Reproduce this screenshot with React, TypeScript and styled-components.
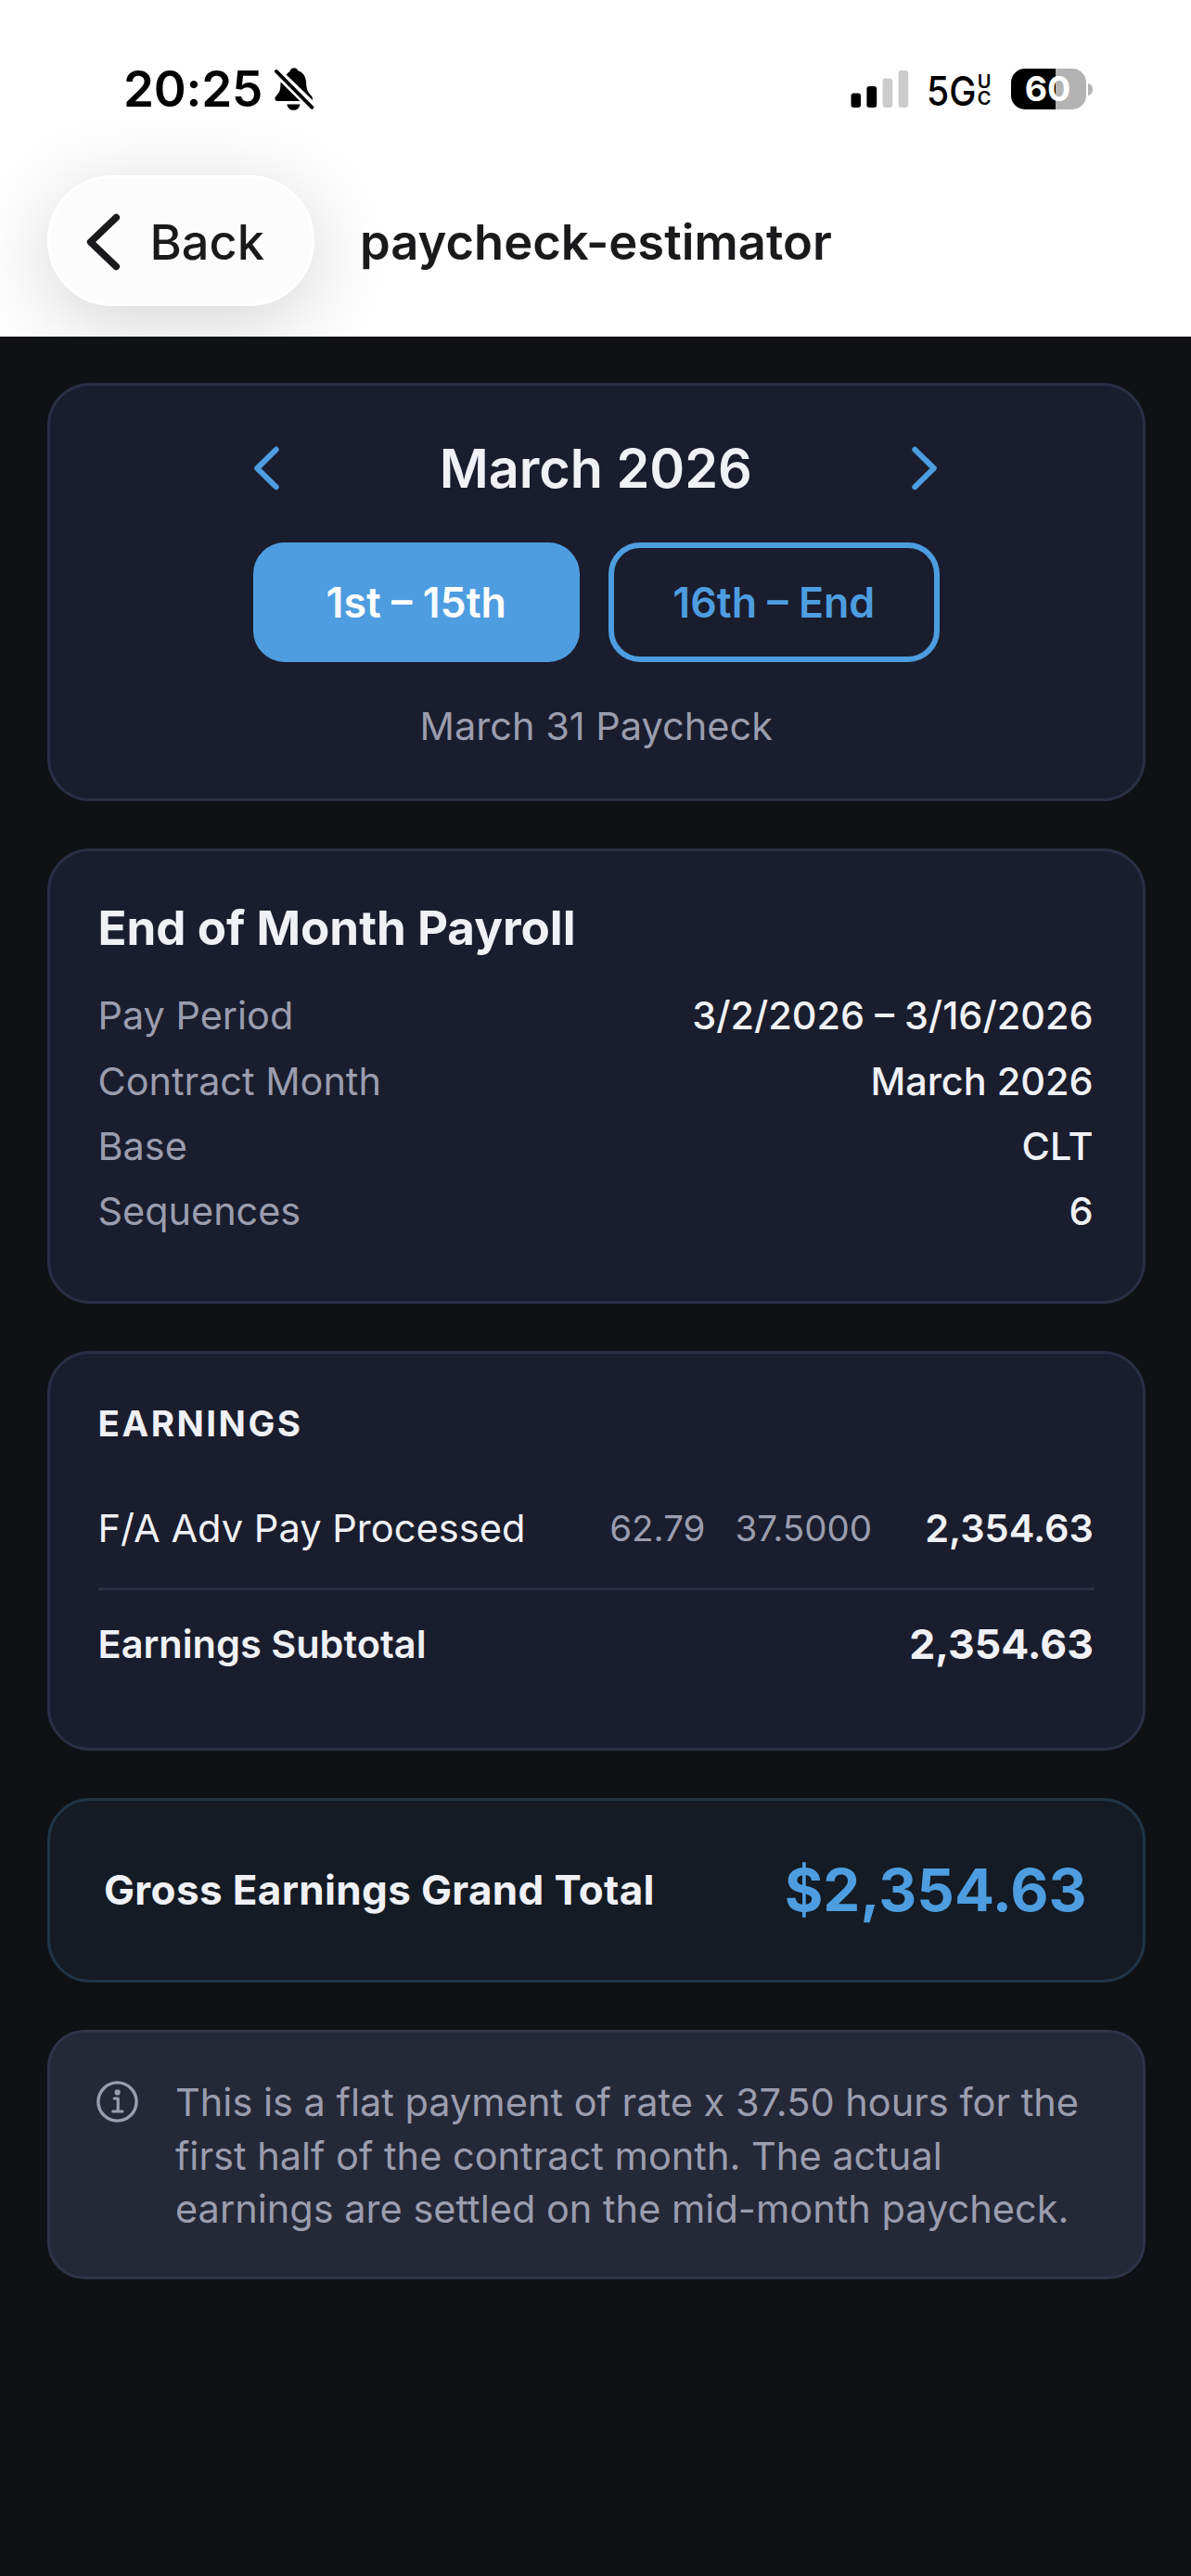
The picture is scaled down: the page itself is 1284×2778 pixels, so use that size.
import React from "react";
import styled, { createGlobalStyle, css } from "styled-components";

const color = {
  page: "#0f1115",
  chrome: "#fefefe",
  ink: "#1a1a1c",
  card: "#1a1d2d",
  line: "#2b2f45",
  text: "#f0f1f6",
  muted: "#9b9dae",
  accent: "#4d9de0",
};

const GlobalStyle = createGlobalStyle`
  *, *::before, *::after { box-sizing: border-box; }
  html, body { margin: 0; background: ${color.page}; }
  body {
    font-family: Inter, "Liberation Sans", sans-serif;
    -webkit-font-smoothing: antialiased;
  }
`;

const Screen = styled.div`
  width: 1284px;
  min-height: 2778px;
  background: ${color.page};
  color: ${color.text};
`;

/* ---------- top chrome ---------- */

const TopBar = styled.header`
  height: 363px;
  overflow: hidden;
  background: ${color.chrome};
`;

const StatusBar = styled.div`
  height: 189px;
  padding: 73px 106px 0 133px;
  display: flex;
  justify-content: space-between;
  align-items: flex-start;
  color: #000;
`;

const StatusGroup = styled.div`
  height: 46px;
  display: flex;
  align-items: center;
`;

const Clock = styled.span`
  font-size: 53px;
  font-weight: 600;
  line-height: 46px;
  letter-spacing: -0.2px;
  margin-right: 13px;
`;

const Network = styled.span`
  display: inline-block;
  width: 50px;
  margin: 3px 0 0 19px;
  font-size: 44px;
  font-weight: 500;
  line-height: 46px;
  transform: scaleX(0.89);
  transform-origin: left center;
  white-space: nowrap;
`;

const NetworkSuffix = styled.span`
  display: flex;
  flex-direction: column;
  width: 16px;
  margin: 1px 0 0 4px;
  font-size: 20px;
  font-weight: 600;
  line-height: 18px;
  text-align: center;
`;

const Battery = styled.span`
  width: 81px;
  height: 44px;
  margin: 0 2px 0 21px;
  border-radius: 15px;
  background: linear-gradient(90deg, #000 59%, #b3b3b3 59%);
  color: #fff;
  font-size: 37.5px;
  font-weight: 700;
  line-height: 44px;
  text-align: center;
  padding-right: 2px;
`;

const BatteryTip = styled.span`
  width: 5px;
  height: 13px;
  border-radius: 0 5px 5px 0 / 0 6.5px 6.5px 0;
  background: #b3b3b3;
`;

const NavBar = styled.div`
  display: flex;
  align-items: center;
  gap: 49px;
  padding-left: 51px;
`;

const BackButton = styled.button`
  width: 288px;
  height: 141px;
  padding: 0 0 0 38.5px;
  display: flex;
  align-items: center;
  gap: 32px;
  border: 3px solid #fff;
  border-radius: 70px;
  background: #fcfcfc;
  box-shadow: 0 18px 84px rgba(0, 0, 0, 0.16);
  color: ${color.ink};
  font: 500 52.3px/60px Inter, "Liberation Sans", sans-serif;

  svg {
    margin-top: 3px;
  }

  span {
    padding-top: 3px;
  }
`;

const PageTitle = styled.h1`
  margin: 3px 0 0;
  color: ${color.ink};
  font-size: 52.5px;
  font-weight: 600;
  line-height: 60px;
`;

/* ---------- cards ---------- */

const Content = styled.main`
  display: flex;
  flex-direction: column;
  gap: 51px;
  padding: 50px 49.5px 0 51px;
`;

const Card = styled.section<{ $pad: string }>`
  padding: ${(p) => p.$pad};
  border: 3px solid ${color.line};
  border-radius: 46px;
  background: ${color.card};
`;

const PeriodCard = styled(Card)`
  display: flex;
  flex-direction: column;
  align-items: center;
`;

const MonthNav = styled.div`
  width: 741px;
  height: 60px;
  padding: 0 2px 0 1px;
  display: flex;
  align-items: center;
  justify-content: space-between;
`;

const MonthLabel = styled.h2`
  margin: 0;
  font-size: 57.5px;
  font-weight: 600;
  line-height: 60px;
`;

const ArrowButton = styled.button`
  display: flex;
  padding: 0;
  border: 0;
  background: none;
  color: ${color.accent};
`;

const HalfToggle = styled.div`
  display: grid;
  grid-template-columns: 352px 357px;
  gap: 31px;
  margin-top: 50px;
`;

const HalfButton = styled.button<{ $active?: boolean }>`
  height: 129px;
  padding: 0;
  border: 6px solid ${color.accent};
  border-radius: 34px;
  font: 600 44.7px/54px Inter, "Liberation Sans", sans-serif;
  ${(p) =>
    p.$active
      ? css`
          background: ${color.accent};
          color: #fff;
        `
      : css`
          background: transparent;
          color: ${color.accent};
        `}
`;

const PaycheckDate = styled.p`
  margin: 44px 0 0;
  color: ${color.muted};
  font-size: 41.5px;
  line-height: 50px;
`;

const CardTitle = styled.h3`
  margin: 0 0 30px;
  font-size: 51.1px;
  font-weight: 700;
  line-height: 60px;
`;

const DetailRow = styled.div`
  height: 70.4px;
  padding-right: 1.5px;
  display: flex;
  justify-content: space-between;
  align-items: center;
  font-size: 41.4px;
  line-height: 50px;
`;

const Label = styled.span`
  color: ${color.muted};
`;

const Value = styled.span`
  font-weight: 500;
`;

const SectionLabel = styled.h3`
  margin: 0 0 24px;
  font-size: 38.5px;
  font-weight: 700;
  line-height: 50px;
  letter-spacing: 2.5px;
`;

const EarningRow = styled.div`
  height: 131px;
  display: grid;
  grid-template-columns: 1fr auto auto 208px;
  column-gap: 32px;
  align-items: center;
  border-bottom: 3px solid ${color.line};
  font-size: 41.6px;
  line-height: 50px;
`;

const Figure = styled.span`
  color: ${color.muted};
  font-size: 38.5px;
`;

const Amount = styled.span`
  padding-right: 1px;
  font-size: 41.5px;
  font-weight: 600;
  text-align: right;
`;

const SubtotalRow = styled.div`
  height: 117px;
  display: flex;
  justify-content: space-between;
  align-items: center;
  padding-right: 1px;
  font-size: 41.5px;
  font-weight: 600;
  line-height: 50px;
`;

const SubtotalAmount = styled.span`
  font-size: 44.5px;
  font-weight: 700;
`;

const TotalCard = styled(Card)`
  height: 199px;
  display: flex;
  justify-content: space-between;
  align-items: center;
  border-color: #1f3547;
  background: #141b24;
`;

const TotalLabel = styled.span`
  font-size: 44px;
  font-weight: 700;
  line-height: 54px;
  letter-spacing: 0.35px;
`;

const TotalAmount = styled.span`
  color: ${color.accent};
  font-size: 63.6px;
  font-weight: 700;
  line-height: 76px;
`;

const NoteCard = styled(Card)`
  display: flex;
  align-items: flex-start;
  gap: 40px;
  border-color: #303349;
  border-radius: 40px;
  background: #252837;
`;

const NoteText = styled.p`
  margin: 0;
  color: ${color.muted};
  font-size: 41.5px;
  line-height: 57.6px;
`;

const NoteIcon = styled.svg`
  flex: none;
  margin-top: 5px;
  color: ${color.muted};
`;

/* ---------- drawings ---------- */

const BellOff = () => (
  <svg width="43" height="47" viewBox="0 0 43 47" fill="#000">
    <path d="M12.6 7.4C14.6 5.2 16.2 4.6 16.8 3.2C17.4 1.2 19 0.2 21 0.2C23 0.2 24.5 1.2 25.2 3.2C30.8 5 33.6 9.4 34 15.5C34.5 24 36 26.6 39.4 30C40.8 31.5 41.2 33 41 35Z" />
    <path d="M6.6 15.6L27.4 36H3.4C1.2 36 0.2 34.8 0.4 33C0.6 30.2 5.4 28.2 6.1 22.4Z" />
    <path d="M13.4 39.4H27.4C26.6 43.4 24.2 45.8 20.4 45.8C16.6 45.8 14.2 43.4 13.4 39.4Z" />
    <path d="M1.9 3.9L40.4 42.8" stroke="#000" strokeWidth="3.8" strokeLinecap="round" />
  </svg>
);

const Signal = () => (
  <svg width="63" height="40" viewBox="0 0 63 40">
    <rect x="0.5" y="24.5" width="10.5" height="15.5" rx="3" fill="#000" />
    <rect x="17.4" y="17" width="10.8" height="23" rx="3" fill="#000" />
    <rect x="34.6" y="8.5" width="10.6" height="31.5" rx="3" fill="#cbcbcb" />
    <rect x="51.6" y="0" width="10.6" height="40" rx="3" fill="#cbcbcb" />
  </svg>
);

const Chevron = ({ flip = false }: { flip?: boolean }) => (
  <svg width="28" height="48" viewBox="0 0 28 48" fill="none">
    <path
      d={flip ? "M3.3 3.8L23.8 24L3.3 44.2" : "M24.7 3.8L4.2 24L24.7 44.2"}
      stroke="currentColor"
      strokeWidth="6"
      strokeLinecap="round"
      strokeLinejoin="round"
    />
  </svg>
);

const BackChevron = () => (
  <svg width="37" height="62" viewBox="0 0 37 62" fill="none">
    <path
      d="M32.3 4.6L4.6 31L32.3 57.4"
      stroke="currentColor"
      strokeWidth="7.6"
      strokeLinecap="round"
      strokeLinejoin="round"
    />
  </svg>
);

const InfoIcon = () => (
  <NoteIcon width="45" height="45" viewBox="0 0 45 45" fill="none">
    <circle cx="22.5" cy="22.5" r="20.6" stroke="currentColor" strokeWidth="3.4" />
    <circle cx="22.6" cy="12.4" r="3.1" fill="currentColor" />
    <path
      d="M19.2 19H23.2V32.8M17.8 33H28"
      stroke="currentColor"
      strokeWidth="3.2"
      strokeLinecap="round"
      strokeLinejoin="round"
    />
  </NoteIcon>
);

const details = [
  ["Pay Period", "3/2/2026 – 3/16/2026"],
  ["Contract Month", "March 2026"],
  ["Base", "CLT"],
  ["Sequences", "6"],
];

export default function App() {
  return (
    <Screen>
      <GlobalStyle />
      <TopBar>
        <StatusBar>
          <StatusGroup>
            <Clock>20:25</Clock>
            <BellOff />
          </StatusGroup>
          <StatusGroup>
            <Signal />
            <Network>5G</Network>
            <NetworkSuffix>
              <span>U</span>
              <span>C</span>
            </NetworkSuffix>
            <Battery>60</Battery>
            <BatteryTip />
          </StatusGroup>
        </StatusBar>
        <NavBar>
          <BackButton>
            <BackChevron />
            <span>Back</span>
          </BackButton>
          <PageTitle>paycheck-estimator</PageTitle>
        </NavBar>
      </TopBar>

      <Content>
        <PeriodCard $pad="59px 0 53px">
          <MonthNav>
            <ArrowButton aria-label="Previous month">
              <Chevron />
            </ArrowButton>
            <MonthLabel>March 2026</MonthLabel>
            <ArrowButton aria-label="Next month">
              <Chevron flip />
            </ArrowButton>
          </MonthNav>
          <HalfToggle>
            <HalfButton $active>1st – 15th</HalfButton>
            <HalfButton>16th – End</HalfButton>
          </HalfToggle>
          <PaycheckDate>March 31 Paycheck</PaycheckDate>
        </PeriodCard>

        <Card $pad="52px 51.5px 61.4px 51.5px">
          <CardTitle>End of Month Payroll</CardTitle>
          {details.map(([label, value]) => (
            <DetailRow key={label}>
              <Label>{label}</Label>
              <Value>{value}</Value>
            </DetailRow>
          ))}
        </Card>

        <Card $pad="50px 51.5px 53px 51.5px">
          <SectionLabel>EARNINGS</SectionLabel>
          <EarningRow>
            <span>F/A Adv Pay Processed</span>
            <Figure>62.79</Figure>
            <Figure>37.5000</Figure>
            <Amount>2,354.63</Amount>
          </EarningRow>
          <SubtotalRow>
            <span>Earnings Subtotal</span>
            <SubtotalAmount>2,354.63</SubtotalAmount>
          </SubtotalRow>
        </Card>

        <TotalCard $pad="0 60px 0 58px">
          <TotalLabel>Gross Earnings Grand Total</TotalLabel>
          <TotalAmount>$2,354.63</TotalAmount>
        </TotalCard>

        <NoteCard $pad="47px 20px 43px 50px">
          <InfoIcon />
          <NoteText>
            This is a flat payment of rate x 37.50 hours for the
            <br />
            first half of the contract month. The actual
            <br />
            earnings are settled on the mid-month paycheck.
          </NoteText>
        </NoteCard>
      </Content>
    </Screen>
  );
}
